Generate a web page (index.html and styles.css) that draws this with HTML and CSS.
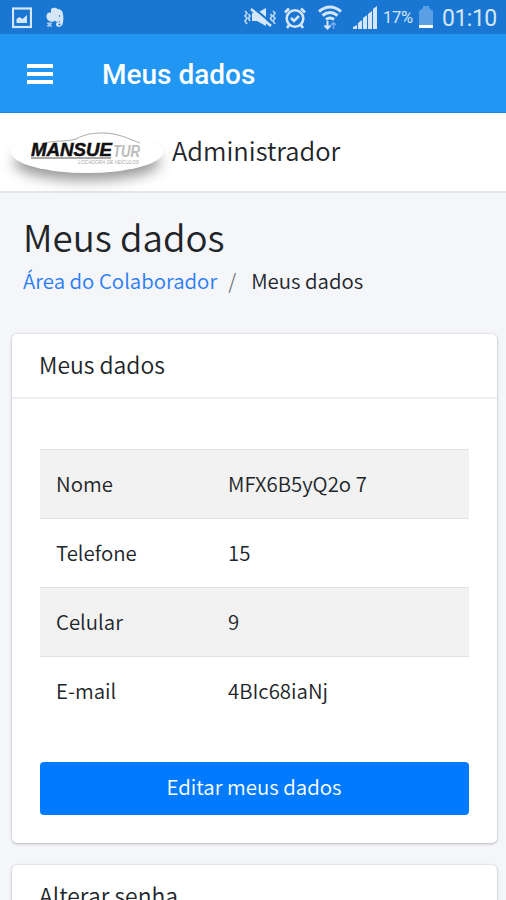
FILE: index.html
```html
<!DOCTYPE html>
<html lang="pt-BR">
<head>
  <meta charset="UTF-8" />
  <meta name="viewport" content="width=device-width, initial-scale=1" />
  <title>Meus dados</title>
  <link rel="stylesheet" href="styles.css">
</head>
<body>
<!-- Status bar -->
<div class="status-bar">
  <div class="status-left">
    <svg width="20" height="22" viewBox="0 0 20 22">
      <rect x="1" y="1.500" width="18" height="18.500" fill="none" stroke="#d5e6f8" stroke-width="2.200"/>
      <path d="M4.500 16v-4l3-2 3 2 4.500-4v8z" fill="#d5e6f8"/>
    </svg>
    <svg width="18" height="22" viewBox="0 0 18 22">
      <path d="M5 2C7 .300 10 .300 11.500 2c3 0 5 1.500 5.500 5 .700 4 .500 8-.800 11-1.200 2.500-6.200 2.500-6.200-.800 0-2 2.500-3 4-1.700l-.500-1.500c-1.500 1.500-4 1-4.500-.500-1.500 1.500-4 1.800-5.500.500C1.500 13.500 0 11 .500 8.500.800 6 2.500 5.500 5 5.500z" fill="#d5e6f8"/>
      <path d="M1.500 15.500l4 4M5.500 15.500l-4 4" stroke="#a5c9ef" stroke-width="1.800"/>
      <path d="M12.500 17.500h2" stroke="#1976d2" stroke-width="1.500"/>
      <circle cx="13.500" cy="9" r=".8" fill="#1976d2"/>
    </svg>
  </div>
  <div class="status-right">
    <svg class="icon-mute" width="34" height="22" viewBox="0 0 34 22" fill="none" stroke="#b9d5f3" stroke-width="1.700">
      <path d="M2 4l2 2-2 3 2 2-2 3 2 3M5.500 7l1.500 2-1.500 2.500L7 14M30 4l2 2-2 3 2 2-2 3 2 3M27.500 7L29 9l-1.500 2.500L29 14"/>
      <path d="M9 6h5l9-5v18l-9-5H9z" fill="#d5e6f8" stroke="none"/>
      <path d="M10 .500l19 16" stroke="#1976d2" stroke-width="2.200"/>
      <path d="M8 2l20 17" stroke="#d5e6f8" stroke-width="2.600"/>
    </svg>
    <svg class="icon-alarm" width="22" height="22" viewBox="0 0 22 22" fill="none" stroke="#d5e6f8" stroke-width="2.600">
      <circle cx="11" cy="11.500" r="8.300"/>
      <path d="M1 5.500l4-4M17 1.500l4 4M5 18l-2 3M17 18l2 3M7 11l3 3 5-5"/>
    </svg>
    <svg class="icon-wifi" width="24" height="26" viewBox="0 0 24 26" fill="none" stroke="#d5e6f8" stroke-width="3">
      <path d="M1 6.500q11-9 22 0M4.500 10.500q7.500-6 15 0M8 14.500q4-3 8 0"/>
      <path d="M9.500 16v7M6.500 20.500l3 3 3-3" stroke-width="2"/>
      <path d="M15.500 24v-6M13 20l2.500-2.500L18 20" stroke="#76adea" stroke-width="1.500"/>
    </svg>
    <svg class="icon-signal" width="24" height="24" viewBox="0 0 24 24" fill="#d5e6f8">
      <path d="M0 23v-2l4-2v4zM5 23v-6l4-3v9zM10 23V12l4-3v14zM15 23V8l4-3v18zM20 23V3l4-3v23z"/>
    </svg>
    <span class="battery-text">17%</span>
    <svg class="icon-battery" width="14" height="23" viewBox="0 0 14 23">
      <path d="M0 5l4-3V0h6v2l4 3v14H0z" fill="#5a9fe4"/>
      <path d="M0 19h14v3H0z" fill="#fff"/>
    </svg>
    <span class="clock">01:10</span>
  </div>
</div>

<!-- App bar -->
<div class="app-bar">
  <div class="menu-icon">
    <span></span>
    <span></span>
    <span></span>
  </div>
  <div class="app-title">Meus dados</div>
</div>

<!-- User bar -->
<div class="user-bar">
  <div class="logo">
    <svg width="116" height="36" viewBox="0 0 116 36">
      <path d="M10 12C22 8 35 10 45 7 54 2 62 1 72 1c14 0 24 5 37 10" fill="none" stroke="#aaa" stroke-width="1"/>
      <text x="0" y="23.500" class="logo-name" textLength="81" lengthAdjust="spacingAndGlyphs">MANSUE</text>
      <text x="82" y="24.500" class="logo-tur" textLength="27" lengthAdjust="spacingAndGlyphs">TUR</text>
      <path d="M0 26h80" stroke="#555" stroke-width="1"/>
      <text x="47" y="31.500" class="logo-sub" textLength="61" lengthAdjust="spacingAndGlyphs">LOCADORA DE VEÍCULOS</text>
    </svg>
  </div>
  <span class="user-name">Administrador</span>
</div>

<div class="content">
  <h1>Meus dados</h1>
  <div class="breadcrumb">
    <a href="#">Área do Colaborador</a>
    <span class="separator">/</span>
    <span>Meus dados</span>
  </div>

  <div class="card">
    <div class="card-header">Meus dados</div>
    <div class="card-body">
      <table class="data-table">
        <tr><td>Nome</td><td>MFX6B5yQ2o 7</td></tr>
        <tr><td>Telefone</td><td>15</td></tr>
        <tr><td>Celular</td><td>9</td></tr>
        <tr><td>E-mail</td><td>4BIc68iaNj</td></tr>
      </table>
      <button class="btn">Editar meus dados</button>
    </div>
  </div>

  <div class="card">
    <div class="card-header">Alterar senha</div>
  </div>
</div>
</body>
</html>
```
FILE: styles.css
```css
* {
  box-sizing: border-box;
}
body {
  margin: 0;
  height: 900px;
  overflow: hidden;
  font-family: 'Noto Sans CJK SC', sans-serif;
  font-weight: 350;
  color: #212529;
  background: #f4f6f9;
}
.status-bar {
  height: 34px;
  padding: 1px 9px 0 12px;
  display: flex;
  justify-content: space-between;
  align-items: center;
  background: #1976d2;
  color: #d5e6f8;
  font-family: Roboto, sans-serif;
  font-weight: 400;
}
.status-left, .status-right {
  display: flex;
  align-items: center;
}
.status-left {
  gap: 14px;
}
.icon-alarm {
  margin-left: 7px;
}
.icon-wifi {
  margin-left: 12px;
}
.icon-signal {
  margin-left: 11px;
}
.battery-text {
  width: 31px;
  margin-left: 6px;
  font-size: 16.500px;
  letter-spacing: -0.3px;
}
.icon-battery {
  margin-left: 5px;
}
.clock {
  width: 55px;
  margin-left: 9px;
  padding-top: 2px;
  font-size: 23px;
  letter-spacing: -0.5px;
}
.app-bar {
  height: 79px;
  padding: 1px 27px 0;
  display: flex;
  align-items: center;
  background: #2196f3;
  border-bottom: 1px solid #1a86e8;
}
.menu-icon {
  width: 26px;
  display: flex;
  flex-direction: column;
  gap: 4px;
}
.menu-icon span {
  height: 4px;
  background: #fff;
}
.app-title {
  padding-top: 2px;
  margin-left: 49px;
  color: white;
  font-family: Roboto, sans-serif;
  font-size: 28px;
  font-weight: 500;
}
.user-bar {
  height: 80px;
  display: flex;
  align-items: center;
  padding-left: 11px;
  background: white;
  border-bottom: 2px solid #e3e6ea;
}
.logo {
  width: 152px;
  height: 42px;
  padding: 1px 0 0 20px;
  border-radius: 50%;
  background: white;
  box-shadow: 0 10px 14px -3px rgba(0,0,0,0.42);
}
.logo svg {
  display: block;
}
.logo-name {
  font: italic bold 18px 'Liberation Sans', sans-serif;
  fill: #111;
  stroke: #111;
  stroke-width: 0.5px;
}
.logo-tur {
  font: italic bold 16px 'Liberation Sans', sans-serif;
  fill: #bbb;
}
.logo-sub {
  font: italic 5px 'Liberation Sans', sans-serif;
  fill: #aaa;
}
.user-name {
  margin-left: 9px;
  padding-bottom: 4px;
  font-size: 25.500px;
  line-height: 36px;
}
.content {
  padding: 19px 9px 0 12px;
}
h1 {
  margin: 0 11px;
  font-size: 36.700px;
  font-weight: 350;
  line-height: 48px;
}
.breadcrumb {
  display: flex;
  margin: 5px 11px 39px;
  font-size: 20.400px;
  line-height: 30px;
}
.breadcrumb a {
  color: #2b7cf7;
  text-decoration: none;
}
.separator {
  margin: 0 15px 0 11px;
  color: #6c757d;
}
.card {
  margin-bottom: 22px;
  background: white;
  border-radius: 5px;
  box-shadow: 0 0 2px rgba(0,0,0,0.15), 0 1px 3px rgba(0,0,0,0.22);
}
.card-header {
  height: 65px;
  padding: 0 27px;
  font-size: 22.900px;
  line-height: 60px;
  border-bottom: 2px solid #eceeef;
}
.card-body {
  padding: 50px 28px 28px;
}
.data-table {
  width: 100%;
  border-collapse: collapse;
  table-layout: fixed;
  font-size: 20.400px;
}
.data-table td {
  height: 69px;
  padding: 0 16px 3px;
  border-top: 1px solid #dee2e6;
}
.data-table td:first-child {
  width: 172px;
}
.data-table tr:nth-child(odd) {
  background: #f2f2f2;
}
.btn {
  display: block;
  width: 100%;
  height: 53px;
  margin-top: 36px;
  padding: 0 1px 4px 0;
  border: none;
  border-radius: 4px;
  background: #007bff;
  color: white;
  font: inherit;
  font-size: 20.400px;
  cursor: pointer;
}
```
